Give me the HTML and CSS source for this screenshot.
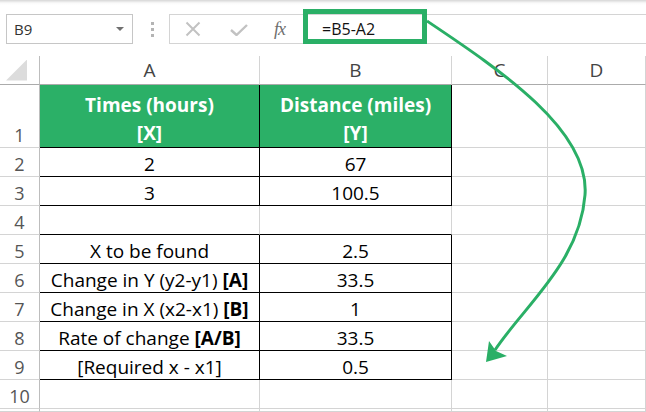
FILE: index.html
```html
<!DOCTYPE html>
<html lang="en">
<head>
    <meta charset="UTF-8">
    <title>Rate of change</title>
    <link rel="stylesheet" href="styles.css">
</head>
<body>

    <div class="shadow"></div>

    <!-- Formula bar -->
    <div class="toolbar">
        <div class="namebox"><span>B9</span><span class="caret"></span></div>
        <div class="grip"><i></i><i></i><i></i></div>
        <div class="fxbtns">
            <svg class="ico-x" width="16" height="16" viewBox="0 0 16 16">
                <path d="M1.5 1.5 L14.5 14.5 M14.5 1.5 L1.5 14.5" stroke="#c2c2c2" stroke-width="2" fill="none"/>
            </svg>
            <svg class="ico-ok" width="18" height="12" viewBox="0 0 18 12">
                <path d="M1 6 L6.5 11 L17 1" stroke="#c2c2c2" stroke-width="2.4" fill="none"/>
            </svg>
            <span class="ico-fx">fx</span>
        </div>
        <div class="formula">=B5-A2</div>
    </div>

    <!-- Sheet -->
    <div class="sheet">
        <div class="corner"><span class="tri"></span></div>
        <div class="ch">A</div>
        <div class="ch">B</div>
        <div class="ch">C</div>
        <div class="ch">D</div>

        <div class="rh">1</div>
        <div class="bd head">Times (hours)<br>[X]</div>
        <div class="bd head">Distance (miles)<br>[Y]</div>
        <div></div><div></div>

        <div class="rh">2</div>
        <div class="bd">2</div>
        <div class="bd">67</div>
        <div></div><div></div>

        <div class="rh">3</div>
        <div class="bd">3</div>
        <div class="bd">100.5</div>
        <div></div><div></div>

        <div class="rh">4</div>
        <div class="bt"></div>
        <div class="bt"></div>
        <div></div><div></div>

        <div class="rh">5</div>
        <div class="bd">X to be found</div>
        <div class="bd">2.5</div>
        <div></div><div></div>

        <div class="rh">6</div>
        <div class="bd">Change in Y (y2-y1)&nbsp;<b>[A]</b></div>
        <div class="bd">33.5</div>
        <div></div><div></div>

        <div class="rh">7</div>
        <div class="bd">Change in X (x2-x1)&nbsp;<b>[B]</b></div>
        <div class="bd">1</div>
        <div></div><div></div>

        <div class="rh">8</div>
        <div class="bd">Rate of change&nbsp;<b>[A/B]</b></div>
        <div class="bd">33.5</div>
        <div></div><div></div>

        <div class="rh">9</div>
        <div class="bd">[Required x - x1]</div>
        <div class="bd">0.5</div>
        <div></div><div></div>

        <div class="rh">10</div>
        <div></div><div></div><div></div><div></div>

        <div class="rh"></div>
        <div></div><div></div><div></div><div></div>
    </div>

    <!-- Annotation -->
    <div class="callout"></div>
    <svg class="arrow" width="646" height="412" viewBox="0 0 646 412">
        <path d="M427 21 C500 70 590 130 585 195 C580 262 525 305 495 350" stroke="#2aaf66" stroke-width="3" fill="none"/>
        <polygon points="486,362 489,341 496,351 507,356" fill="#2aaf66"/>
    </svg>

</body>
</html>
```

FILE: styles.css
```css
body {
    margin: 0;
    background: #fff;
    font-family: "Open Sans", sans-serif;
    position: relative;
    overflow: hidden;
    height: 412px;
}
.shadow {
    height: 5px;
    background: linear-gradient(#d6d6d6, #fafafa 60%, #fff);
}
.toolbar {
    display: flex;
    align-items: center;
    height: 30px;
    margin-top: 9px;
}
.namebox {
    width: 127px;
    height: 30px;
    margin-left: 6px;
    box-sizing: border-box;
    border: 1px solid #c6c6c6;
    display: flex;
    align-items: center;
    justify-content: space-between;
    padding: 0 8px 0 7px;
    font-size: 15px;
    color: #333;
}
.caret {
    width: 0;
    height: 0;
    border-left: 4px solid transparent;
    border-right: 4px solid transparent;
    border-top: 4px solid #707070;
}
.grip {
    display: flex;
    flex-direction: column;
    gap: 3px;
    margin: 0 15px 0 18px;
}
.grip i {
    display: block;
    width: 3px;
    height: 3px;
    background: #b4b4b4;
}
.fxbtns {
    width: 135px;
    height: 30px;
    box-sizing: border-box;
    border: 1px solid #d4d4d4;
    display: flex;
    align-items: center;
}
.ico-x {
    margin-left: 15px;
}
.ico-ok {
    margin-left: 29px;
    margin-top: 2px;
}
.ico-fx {
    margin-left: 26px;
    font: italic 18px "Liberation Serif", serif;
    color: #6e6e6e;
    letter-spacing: -1px;
}
.formula {
    flex: 1;
    height: 30px;
    box-sizing: border-box;
    border-top: 1px solid #d4d4d4;
    border-bottom: 1px solid #d4d4d4;
    padding-left: 18px;
    font-size: 16px;
    line-height: 28px;
    color: #111;
}
.sheet {
    display: grid;
    grid-template-columns: 40px 220px 192px 96px 98px;
    grid-template-rows: 29px 63px repeat(9, 29px) 3px;
    margin-top: 12px;
}
.sheet > div {
    box-sizing: border-box;
    border-right: 1px solid #d4d4d4;
    border-bottom: 1px solid #d4d4d4;
    display: flex;
    align-items: flex-end;
    justify-content: center;
    text-align: center;
    font-size: 19px;
    line-height: 24px;
    color: #000;
    overflow: hidden;
}
.sheet > .corner {
    border-right-color: #bdbdbd;
    border-bottom-color: #ababab;
    align-items: center;
}
.tri {
    width: 21px;
    height: 21px;
    margin: 0 0 0 -6px;
    background: #dcdcdc;
    clip-path: polygon(100% 0, 100% 100%, 0 100%);
}
.sheet > .ch {
    align-items: center;
    border-bottom-color: #ababab;
    font-size: 19px;
    line-height: 27px;
    color: #444;
}
.sheet > .rh {
    border-right-color: #bdbdbd;
    font-size: 18px;
    line-height: 24px;
    color: #555;
}
.sheet > .bd {
    border-right-color: #000;
    border-bottom-color: #000;
}
.sheet > .bt {
    border-bottom-color: #000;
}
.sheet > .head {
    background: #2bb067;
    color: #fff;
    font-weight: bold;
    line-height: 28px;
}
.callout {
    position: absolute;
    left: 303px;
    top: 9px;
    width: 124px;
    height: 35px;
    box-sizing: border-box;
    border: 5px solid #2aaf66;
}
.arrow {
    position: absolute;
    left: 0;
    top: 0;
}
```
